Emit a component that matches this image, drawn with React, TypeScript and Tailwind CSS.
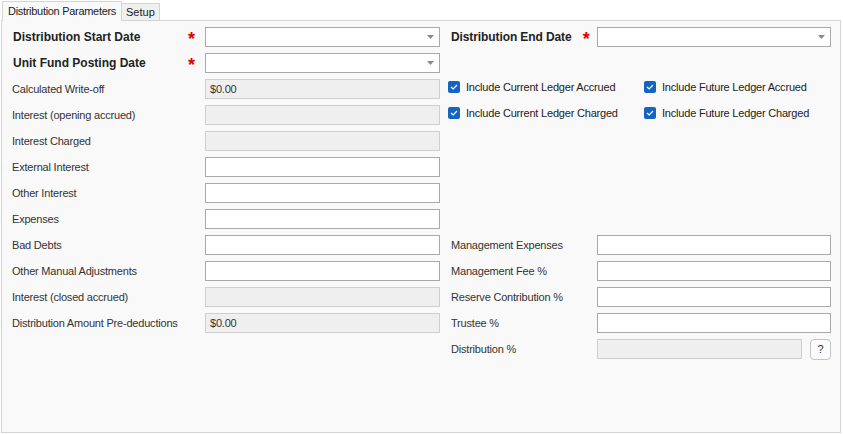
import React from 'react';

const font = { fontFamily: '"Liberation Sans", Arial, sans-serif' };

function Arrow() {
  return (
    <svg width="7" height="4" viewBox="0 0 7 4" className="absolute right-[5px] top-1/2 -translate-y-1/2">
      <path d="M0 0 H7 L3.5 4 Z" fill="#8a8a8a" />
    </svg>
  );
}

function Combo({ w }: { w: string }) {
  return <div className={`relative h-[20px] ${w} border border-[#a9a9a9] bg-white`}><Arrow /></div>;
}

function Field({ disabled, value, w = 'w-[235px]' }: { disabled?: boolean; value?: string; w?: string }) {
  return (
    <div
      className={`h-[20px] ${w} border flex items-center px-[4px] text-[11px] tracking-[-0.2px] text-[#333] ${
        disabled ? 'bg-[#efefef] border-[#cfcfcf]' : 'bg-white border-[#a9a9a9]'
      }`}
    >
      {value}
    </div>
  );
}

function Star() {
  return <span className="text-[#e00000] text-[18px] font-bold leading-none mt-[3px]">*</span>;
}

function Check({ label }: { label: string }) {
  return (
    <div className="flex items-center gap-[6px]">
      <span className="w-[12px] h-[12px] rounded-[2px] bg-[#1565c0] flex items-center justify-center">
        <svg width="8" height="6" viewBox="0 0 8 6">
          <path d="M1 3 L3.2 5 L7 1" stroke="white" strokeWidth="1.2" fill="none" />
        </svg>
      </span>
      <span className="text-[11px] tracking-[-0.2px] text-[#222] whitespace-nowrap">{label}</span>
    </div>
  );
}

const leftRows: { label: string; kind: 'combo' | 'field' | 'disabled'; value?: string; bold?: boolean }[] = [
  { label: 'Distribution Start Date', kind: 'combo', bold: true },
  { label: 'Unit Fund Posting Date', kind: 'combo', bold: true },
  { label: 'Calculated Write-off', kind: 'disabled', value: '$0.00' },
  { label: 'Interest (opening accrued)', kind: 'disabled' },
  { label: 'Interest Charged', kind: 'disabled' },
  { label: 'External Interest', kind: 'field' },
  { label: 'Other Interest', kind: 'field' },
  { label: 'Expenses', kind: 'field' },
  { label: 'Bad Debts', kind: 'field' },
  { label: 'Other Manual Adjustments', kind: 'field' },
  { label: 'Interest (closed accrued)', kind: 'disabled' },
  { label: 'Distribution Amount Pre-deductions', kind: 'disabled', value: '$0.00' },
];

export default function App() {
  return (
    <div className="w-[843px] h-[434px] bg-white pt-[1px] pl-[1px] text-[#222]" style={font}>
      {/* Tabs */}
      <div className="flex items-end h-[19px] pl-[1px]">
        <div className="h-[20px] shrink-0 px-[5px] border border-b-0 border-[#d4d4d4] bg-[#f9f9f9] text-[11px] tracking-[-0.3px] flex items-center relative z-10 -mb-[1px] whitespace-nowrap">
          Distribution Parameters
        </div>
        <div className="h-[17px] shrink-0 px-[4px] border border-l-0 border-b-0 border-[#d4d4d4] bg-[#f0f0f0] text-[11px] flex items-center">
          Setup
        </div>
      </div>

      {/* Panel */}
      <div className="w-[840px] h-[413px] border border-[#d4d4d4] bg-[#f9f9f9] pl-[10px] pt-[3px] flex">
        {/* Left column */}
        <div className="flex flex-col w-[429px]">
          {leftRows.map((r) => (
            <div key={r.label} className="h-[26px] flex items-center">
              <div className="w-[193px] flex items-center justify-between pr-[10px]">
                <span
                  className={`whitespace-nowrap ${
                    r.bold ? 'text-[12px] font-bold text-[#222] pl-[1px]' : 'text-[11px] tracking-[-0.2px] text-[#333]'
                  }`}
                >
                  {r.label}
                </span>
                {r.bold && <Star />}
              </div>
              {r.kind === 'combo' ? (
                <Combo w="w-[235px]" />
              ) : (
                <Field disabled={r.kind === 'disabled'} value={r.value} />
              )}
            </div>
          ))}
        </div>

        {/* Right column */}
        <div className="flex flex-col w-[390px] pl-[10px]">
          <div className="h-[26px] flex items-center">
            <div className="w-[147px] flex items-center justify-between pr-[7px]">
              <span className="text-[12px] font-bold tracking-[-0.1px] whitespace-nowrap">Distribution End Date</span>
              <Star />
            </div>
            <Combo w="w-[236px]" />
          </div>
          <div className="h-[24px]" />
          <div className="h-[26px] flex items-center -ml-[3px]">
            <div className="w-[196px]"><Check label="Include Current Ledger Accrued" /></div>
            <Check label="Include Future Ledger Accrued" />
          </div>
          <div className="h-[26px] flex items-center -ml-[3px]">
            <div className="w-[196px]"><Check label="Include Current Ledger Charged" /></div>
            <Check label="Include Future Ledger Charged" />
          </div>
          <div className="h-[106px]" />
          {['Management Expenses', 'Management Fee %', 'Reserve Contribution %', 'Trustee %'].map((l) => (
            <div key={l} className="h-[26px] flex items-center">
              <span className="w-[147px] text-[11px] tracking-[-0.2px] text-[#333] whitespace-nowrap">{l}</span>
              <Field w="w-[236px]" />
            </div>
          ))}
          <div className="h-[26px] flex items-center">
            <span className="w-[147px] text-[11px] tracking-[-0.2px] text-[#333]">Distribution %</span>
            <Field disabled w="w-[207px]" />
            <div className="ml-[8px] w-[21px] h-[21px] rounded-[4px] border border-[#c4c4c4] bg-[#fbfbfb] flex items-center justify-center text-[11px] text-[#333]">
              ?
            </div>
          </div>
        </div>
      </div>
    </div>
  );
}
